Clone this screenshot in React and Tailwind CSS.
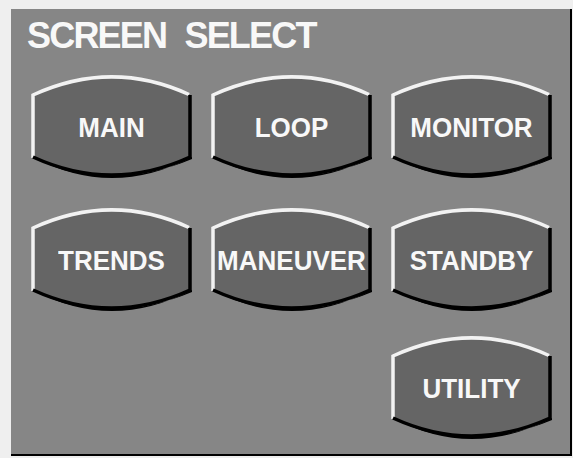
import React from 'react';

// Bevelled "barrel" button: straight sides, arched top and bottom
const BarrelButton = ({ label }) => (
  <div className="relative flex h-[103px] w-[161px] items-center justify-center">
    <svg className="absolute inset-0" width="161" height="103" viewBox="0 0 161 103">
      <path d="M2,20 Q80.5,-16 159,20 L159,82 Q80.5,118 2,82 Z" fill="#656565" />
      {/* highlight: left side + top arch */}
      <path d="M2,83 L2,20 Q80.5,-16 158,19.5" fill="none" stroke="#f2f2f2" strokeWidth="3.5" />
      {/* shadow: right side + bottom arch, thicker in the middle */}
      <path d="M159,20 L159,82 Q80.5,118 2,82" fill="none" stroke="#000" strokeWidth="3.5" />
      <path d="M2,82 Q80.5,124 161,82 L161,84 Q80.5,118 2,82 Z" fill="#000" />
    </svg>
    <span className="relative scale-y-[1.08] text-[26px] font-bold leading-none text-[#f8f8f8] [font-family:'Liberation_Sans',Arial,sans-serif]">
      {label}
    </span>
  </div>
);

export default function App() {
  return (
    <div className="h-[458px] w-[573px] overflow-hidden bg-[#efefef] pl-[11px] pt-[9px]">
      <div className="flex h-[447px] w-[561px] flex-col border-b-2 border-r-2 border-black bg-[#868686]">
        <div className="pl-[16px] pt-[9px] text-[36px] font-bold leading-[36px] tracking-[-1.8px] [word-spacing:10px] text-[#f8f8f8] [font-family:'Liberation_Sans',Arial,sans-serif]">
          SCREEN SELECT
        </div>

        <div className="mt-[21px] grid grid-cols-[161px_161px_161px] gap-x-[19px] pl-[20px]">
          <BarrelButton label="MAIN" />
          <BarrelButton label="LOOP" />
          <BarrelButton label="MONITOR" />
        </div>

        <div className="mt-[30px] grid grid-cols-[161px_161px_161px] gap-x-[19px] pl-[20px]">
          <BarrelButton label="TRENDS" />
          <BarrelButton label="MANEUVER" />
          <BarrelButton label="STANDBY" />
        </div>

        <div className="mt-[25px] grid grid-cols-[161px_161px_161px] gap-x-[19px] pl-[20px]">
          <div />
          <div />
          <BarrelButton label="UTILITY" />
        </div>
      </div>
    </div>
  );
}
